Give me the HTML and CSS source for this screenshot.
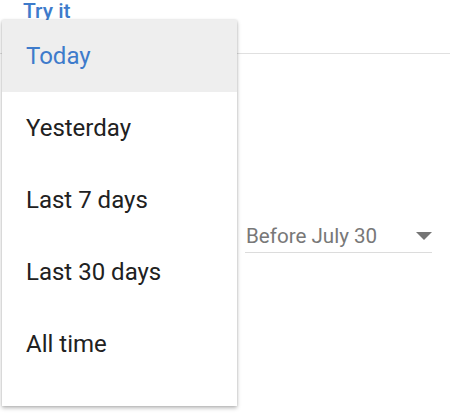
FILE: index.html
```html
<!DOCTYPE html>
<html>
<head>
<meta charset="utf-8">
<link rel="stylesheet" href="styles.css">
</head>
<body>
<div class="page">
  <header class="tabs">
    <span class="tab">Try it</span>
  </header>
  <main class="content">
    <div class="field">
      <span class="field-value">Before July 30</span>
      <span class="caret"></span>
    </div>
  </main>
  <ul class="menu">
    <li class="menu-item selected">Today</li>
    <li class="menu-item">Yesterday</li>
    <li class="menu-item">Last 7 days</li>
    <li class="menu-item">Last 30 days</li>
    <li class="menu-item">All time</li>
  </ul>
</div>
</body>
</html>
```
FILE: styles.css
```css
html, body {
  margin: 0;
  padding: 0;
  background: #fff;
}
body {
  font-family: Roboto, "Liberation Sans", sans-serif;
  width: 450px;
  height: 419px;
  overflow: hidden;
}
.page {
  position: relative;
  height: 419px;
}
.tabs {
  box-sizing: border-box;
  height: 54px;
  border-bottom: 1px solid #e0e0e0;
  padding-left: 23px;
}
.tab {
  display: inline-block;
  padding-top: 1px;
  font-size: 21px;
  line-height: 21px;
  font-weight: 500;
  color: #3e7bcb;
}
.content {
  padding-left: 245px;
}
.field {
  margin-top: 170px;
  width: 187px;
  display: flex;
  justify-content: space-between;
  align-items: center;
  padding-bottom: 4px;
  border-bottom: 1px solid #dcdcdc;
}
.field-value {
  font-size: 20.6px;
  line-height: 24px;
  color: #787878;
  padding-left: 1px;
}
.caret {
  width: 0;
  height: 0;
  border-left: 8px solid transparent;
  border-right: 8px solid transparent;
  border-top: 8px solid #757575;
}
.menu {
  position: absolute;
  left: 2px;
  top: 20px;
  width: 235px;
  margin: 0;
  padding: 0 0 26px 0;
  list-style: none;
  background: #fff;
  box-shadow: 0 2px 4px rgba(0,0,0,0.28), 0 0 2px rgba(0,0,0,0.12);
}
.menu-item {
  height: 72px;
  display: flex;
  align-items: center;
  padding-left: 24px;
  font-size: 24px;
  color: #212121;
}
.menu-item.selected {
  background: #eeeeee;
  color: #3e7bcb;
}
```
